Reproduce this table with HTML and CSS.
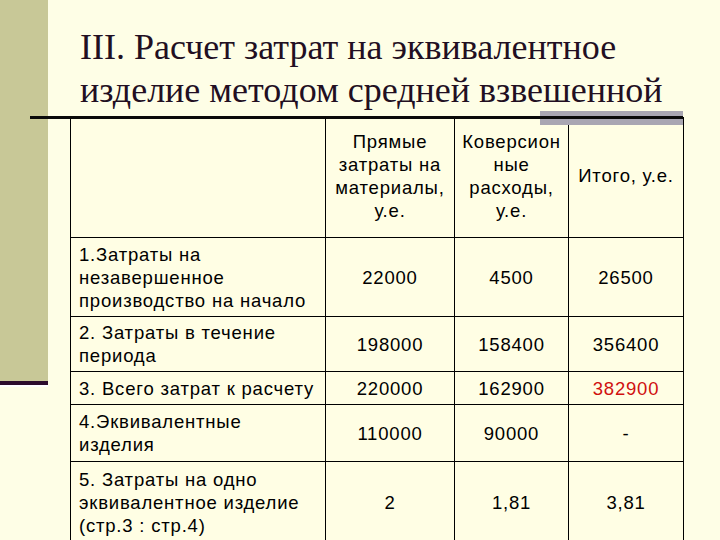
FILE: index.html
```html
<!DOCTYPE html>
<html>
<head>
<meta charset="utf-8">
<title>Расчет затрат</title>
<link rel="stylesheet" href="styles.css">
</head>
<body>
<div class="slide">
  <aside class="side"></aside>
  <main class="content">
    <p class="title">III. Расчет затрат на эквивалентное<br>изделие методом средней взвешенной</p>
    <div class="rule"><span class="rule-shade"></span><span class="rule-line"></span></div>
    <table class="costs">
      <colgroup>
        <col class="c1"><col class="c2"><col class="c3"><col class="c4">
      </colgroup>
      <tr class="r-head">
        <td></td>
        <td class="num">Прямые<br>затраты на<br>материалы,<br>у.е.</td>
        <td class="num">Коверсион<br>ные<br>расходы,<br>у.е.</td>
        <td class="num">Итого, у.е.</td>
      </tr>
      <tr class="r1">
        <td>1.Затраты на<br>незавершенное<br>производство на начало</td>
        <td class="num">22000</td><td class="num">4500</td><td class="num">26500</td>
      </tr>
      <tr class="r2">
        <td>2. Затраты в течение<br>периода</td>
        <td class="num">198000</td><td class="num">158400</td><td class="num">356400</td>
      </tr>
      <tr class="r3">
        <td>3. Всего затрат к расчету</td>
        <td class="num">220000</td><td class="num">162900</td><td class="num red">382900</td>
      </tr>
      <tr class="r4">
        <td>4.Эквивалентные<br>изделия</td>
        <td class="num">110000</td><td class="num">90000</td><td class="num">-</td>
      </tr>
      <tr class="r5">
        <td>5. Затраты на одно<br>эквивалентное изделие<br>(стр.3 : стр.4)</td>
        <td class="num">2</td><td class="num">1,81</td><td class="num">3,81</td>
      </tr>
    </table>
  </main>
</div>
</body>
</html>
```

FILE: styles.css
```css
html, body {
  margin: 0;
  padding: 0;
  background: #fefee6;
}
.slide {
  display: flex;
  width: 720px;
  height: 540px;
  overflow: hidden;
  align-items: flex-start;
}
.side {
  flex: 0 0 48px;
  height: 381px;
  background: #c8c897;
  border-bottom: 4px solid #2c0c2c;
  box-shadow: 0 2px 0 #ffffff;
}
.content {
  flex: 1 1 auto;
  display: flex;
  flex-direction: column;
}
.title {
  margin: 0;
  padding: 26px 0 0 32px;
  height: 86px;
  box-sizing: content-box;
  font-family: "Liberation Serif", "Times New Roman", serif;
  font-size: 36px;
  line-height: 43px;
  color: #220f22;
}
.rule {
  position: relative;
  margin: 4px 0 0 -18px;
  width: 653px;
  height: 3px;
}
.rule-line {
  display: block;
  position: relative;
  height: 3px;
  background: #0a0a0a;
}
.rule-shade {
  position: absolute;
  left: 510px;
  right: 0;
  top: -5px;
  height: 14px;
  background: #a9a6b2;
}
.costs {
  margin: -2px 0 0 22px;
  width: 613px;
  border-collapse: collapse;
  table-layout: fixed;
  font-family: "Liberation Sans", Arial, sans-serif;
  font-size: 18.5px;
  letter-spacing: 0.8px;
  line-height: 23px;
  color: #000;
}
.c1 { width: 255px; }
.c2 { width: 129px; }
.c3 { width: 114px; }
.c4 { width: 115px; }
.costs td {
  border: 1px solid #000;
  padding: 0 0 0 8px;
  vertical-align: middle;
  white-space: nowrap;
  background: #fffee4;
}
.costs td.num {
  text-align: center;
  padding: 0;
}
.red { color: #d01010; }
.r-head td { height: 115px; padding-bottom: 4px; }
.r-head td.num { padding-bottom: 4px; }
.r1 td { height: 78px; }
.r2 td { height: 54px; }
.r3 td { height: 32px; }
.r4 td { height: 56px; }
.r5 td { height: 80px; }
```
